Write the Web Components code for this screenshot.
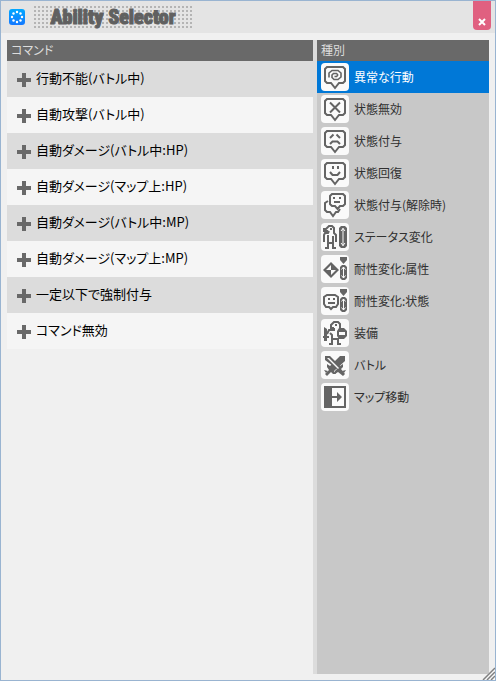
<!DOCTYPE html>
<html lang="ja">
<head>
<meta charset="utf-8">
<meta name="viewport" content="width=device-width">
<title>Ability Selector</title>
<style>
html, body { margin: 0; height: 100%; }
body { font-family: "Noto Sans CJK JP", sans-serif; font-feature-settings: "palt"; }
</style>
</head>
<body>
<selector-window>
  <window-title slot="title">Ability Selector</window-title>
  <list-panel slot="main" heading="コマンド">
    <command-row>行動不能(バトル中)</command-row>
    <command-row>自動攻撃(バトル中)</command-row>
    <command-row>自動ダメージ(バトル中:HP)</command-row>
    <command-row>自動ダメージ(マップ上:HP)</command-row>
    <command-row>自動ダメージ(バトル中:MP)</command-row>
    <command-row>自動ダメージ(マップ上:MP)</command-row>
    <command-row>一定以下で強制付与</command-row>
    <command-row>コマンド無効</command-row>
  </list-panel>
  <list-panel slot="side" heading="種別" tone="dark">
    <category-row icon="spiral" selected>異常な行動</category-row>
    <category-row icon="cross">状態無効</category-row>
    <category-row icon="sad">状態付与</category-row>
    <category-row icon="happy">状態回復</category-row>
    <category-row icon="double">状態付与(解除時)</category-row>
    <category-row icon="status">ステータス変化</category-row>
    <category-row icon="element">耐性変化:属性</category-row>
    <category-row icon="state">耐性変化:状態</category-row>
    <category-row icon="equip">装備</category-row>
    <category-row icon="battle">バトル</category-row>
    <category-row icon="map">マップ移動</category-row>
  </list-panel>
</selector-window>
<script>
const BUBBLE = '<path d="M6 4H22L24 6V18L22 20H18L14 25L10 20H6L4 18V6Z"/>';
const GAUGE = '<path class="f" d="M19 2H26V5L22.500 9L19 5Z"/><path class="f" d="M21 10H24L26 12V23L24 25H21L19 23V12Z"/><path class="w" d="M22.500 12V23M20.500 14.500L22.500 12L24.500 14.500M20.500 20.500L22.500 23L24.500 20.500"/>';
const ICONS = {
  spiral: BUBBLE + '<path stroke-width="1.600" d="M13.500 13.500H15.500L16.500 12.500V11.500L15.500 10.500H12.500L11 12V14.500L13 16.500H17L20 14V10L17 7.500H11L8 10V14.500"/>',
  cross: BUBBLE + '<path d="M9 7.500L19 17.500M19 7.500L9 17.500"/>',
  sad: BUBBLE + '<path d="M9 11L12.500 7.500M19 11L15.500 7.500M9 17L11.500 14.500H16.500L19 17"/>',
  happy: BUBBLE + '<path d="M12 7V10M17 7V10M9 13L11.500 16H16.500L19 13"/>',
  double: '<path d="M7 10L4 12V19L6 21H9L12 25L15 21H17L19 18"/><path d="M11 3H22L24 5V13L22 15H19L16.500 18L14 15H11L9 13V5Z"/><path d="M12 7H14M18 7H20M13 11H19"/>',
  status: '<path d="M7 8H3V6H5L8 3H11L13 5V10L15 12V19M8 8L7 10H4L3 12V19M7 12V25H4M7 20H13M12 13V25H15M10 5V7"/><path class="f" d="M20 3H24L26 5V23L24 25H20L18 23V5Z"/><path class="w" d="M22 5V23M20 8L22 5.500L24 8M20 20L22 22.500L24 20"/>',
  element: '<path class="f" d="M10 7L18 15L10 23L2 15Z"/><path class="p" d="M10 10V15H5ZM10 15H15L10 20Z"/>' + GAUGE,
  state: '<path d="M6 8H14L17 10V17L15 20H12L10 22L8 20H5L3 17V10Z"/><path d="M7 12H9M12 12H14M7 16H14"/>' + GAUGE,
  equip: '<path d="M13 9H10V6L13 3H17L19 5V9M13 9V11H8L6 15M9 14L11 16V25H8M11 20H17V25H20M15 5V7"/><path class="f" d="M3 8L6 10V17H8V19H6V22H3V19H2V17H3Z"/><path class="f" d="M18 9H23L26 12V17L23 20H18L16 17V12Z"/><path class="p" d="M18 13H24V16H18Z"/>',
  battle: '<path class="f" d="M19 5H24V10L13 20L15 23H12L10 21L6 25L4 23L8 19L6 16V13L9 15Z"/><path class="f" d="M4 5H9L19 15L22 13V16L20 18L24 23L22 25L17 21L14 23V20L16 18L4 9Z"/><path class="p" d="M6 7H8L18 17L17 18Z"/><path class="f" d="M3 19L7 20L5 22ZM25 19L21 20L23 22Z"/>',
  map: '<path d="M4 4H24V24H4Z"/><path class="f" d="M4 4H11V24H4Z"/><path class="f" d="M11 13H16V9L21 14L16 19V15H11Z"/>'
};

function define(name, markup, setup) {
  const template = document.createElement('template');
  template.innerHTML = markup;
  customElements.define(name, class extends HTMLElement {
    constructor() {
      super();
      this.attachShadow({ mode: 'open' }).append(template.content.cloneNode(true));
    }
    connectedCallback() { if (setup) setup(this, this.shadowRoot); }
  });
}

define('window-title', `<style>
:host { display: flex; align-items: center; gap: 9px; }
svg { width: 16px; height: 16px; }
h1 { margin: 0; width: 158px; height: 22px; text-align: center; color: #606060;
  font: 900 20px/22px Impact, "Roboto Condensed", "Liberation Sans", sans-serif; -webkit-text-stroke: 1px #606060;
  background: conic-gradient(#b4b4b4 25%, transparent 0) -2px 0 / 4px 4px; }
</style>
<svg viewBox="0 0 16 16" aria-hidden="true"><defs><linearGradient id="g" x2="0" y2="1"><stop stop-color="#00a8ff"/><stop offset="1" stop-color="#1478ff"/></linearGradient></defs><rect width="16" height="16" rx="3" fill="url(#g)"/><g fill="#fff"><circle cx="8" cy="3" r="1.200"/><circle cx="11.500" cy="4.500" r="1.200"/><circle cx="13" cy="8" r="1.200"/><circle cx="11.500" cy="11.500" r="1.200"/><circle cx="8" cy="13" r="1.200"/><circle cx="4.500" cy="11.500" r="1.200"/><circle cx="3" cy="8" r="1.200"/><circle cx="4.500" cy="4.500" r="1.200"/></g></svg>
<h1><slot></slot></h1>`);

define('selector-window', `<style>
:host { display: flex; flex-direction: column; box-sizing: border-box; min-height: 100%; position: relative; border: 1px solid #99b4d1; background: #f0f0f0; }
header { display: flex; justify-content: space-between; height: 32px; padding: 0 4px 0 8px; background: #e4e4e4; }
button { width: 18px; height: 29px; padding: 12px 0 0; border: 0; border-radius: 0 0 4px 4px; background: #e06080; }
button svg { display: block; margin: auto; }
main { flex: 1; display: grid; grid-template-columns: 1fr 172px; gap: 4px; margin: 7px 6px 6px; background: linear-gradient(#dcdcdc, #dcdcdc) right 172px top 0 / 4px 100% no-repeat; }
.grip { position: absolute; right: 0; bottom: 0; }
</style>
<header><slot name="title"></slot><button type="button" aria-label="閉じる"><svg width="8" height="8" viewBox="0 0 8 8"><path d="M1 1L7 7M7 1L1 7" stroke="#fff" stroke-width="2"/></svg></button></header>
<main><slot name="main"></slot><slot name="side"></slot></main>
<svg class="grip" width="13" height="13" viewBox="0 0 13 13" aria-hidden="true"><path d="M0 13L13 0V13Z" fill="#f8f8f8"/><path d="M1 13L13 1M5 13L13 5M9 13L13 9" stroke="#808080" stroke-width="1.500"/></svg>`);

define('list-panel', `<style>
:host { display: block; }
:host([tone="dark"]) { background: #c8c8c8; }
h2 { margin: 0; padding: 0 4px; height: 21px; background: #696969; color: #dcdcdc; font-size: 12px; line-height: 20px; font-weight: 400; }
</style><h2></h2><slot></slot>`, (host, root) => { root.querySelector('h2').textContent = host.getAttribute('heading'); });

define('command-row', `<style>
:host { display: block; background: #f5f5f5; }
:host(:nth-child(odd)) { background: #dcdcdc; }
button { display: flex; align-items: center; gap: 5px; width: 100%; height: 36px; padding: 0 10px 2px; border: 0; background: none; color: #000; font: inherit; font-feature-settings: inherit; font-size: 13px; line-height: 34px; }
svg { width: 14px; height: 14px; margin-top: 4px; }
</style><button type="button"><svg viewBox="0 0 14 14" aria-hidden="true"><path d="M5 0H9V5H14V9H9V14H5V9H0V5H5Z" fill="#696969"/></svg><span><slot></slot></span></button>`);

define('category-row', `<style>
:host { display: block; color: #303030; }
:host([selected]) { background: #0078d7; color: #fff; }
button { display: flex; align-items: center; gap: 5px; width: 100%; height: 32px; padding: 0 4px; border: 0; background: none; color: inherit; font: inherit; font-feature-settings: inherit; font-size: 12px; line-height: 32px; }
svg { width: 28px; height: 28px; fill: none; stroke: #646464; stroke-width: 2; }
rect { fill: #fafafa; stroke: none; }
.f { fill: #646464; stroke: none; } .p { fill: #fafafa; stroke: none; } .w { stroke: #fafafa; stroke-width: 1; }
</style><button type="button"><svg viewBox="0 0 28 28" aria-hidden="true"></svg><span><slot></slot></span></button>`, (host, root) => {
  root.querySelector('svg').innerHTML = '<rect width="28" height="28" rx="4"/>' + ICONS[host.getAttribute('icon')];
});
</script>
</body>
</html>
